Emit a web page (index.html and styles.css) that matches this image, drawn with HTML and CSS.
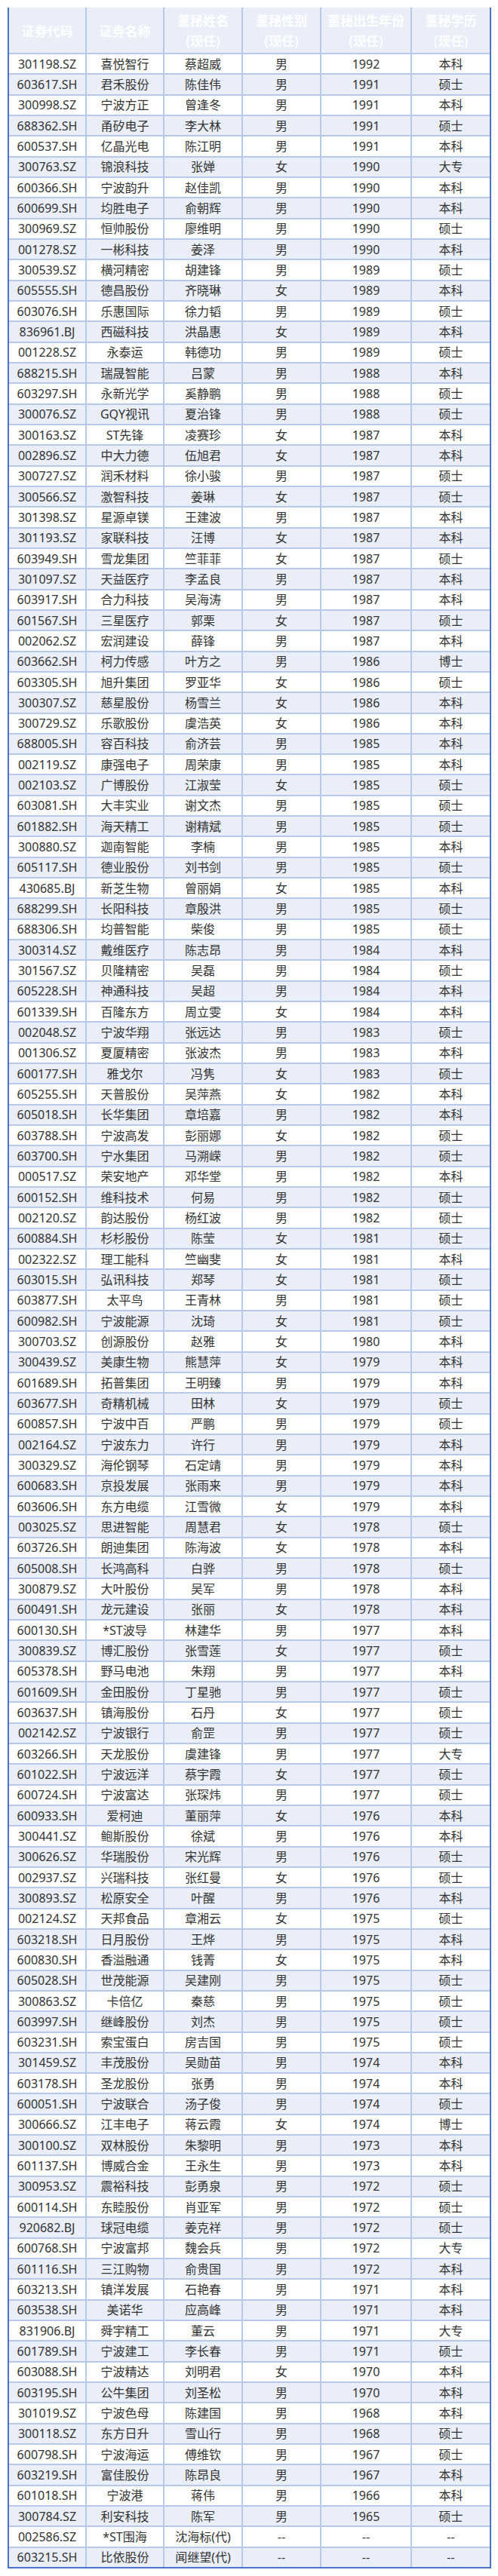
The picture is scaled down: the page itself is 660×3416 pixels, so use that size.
FILE: index.html
```html
<!DOCTYPE html>
<html lang="zh-CN">
<head>
<meta charset="utf-8">
<title>董秘信息</title>
<link rel="stylesheet" href="styles.css">
</head>
<body>
<div class="sheet">
  <div class="row head">
    <div class="cell">证券代码</div>
    <div class="cell">证券名称</div>
    <div class="cell">董秘姓名<br>(现任)</div>
    <div class="cell">董秘性别<br>(现任)</div>
    <div class="cell">董秘出生年份<br>(现任)</div>
    <div class="cell">董秘学历<br>(现任)</div>
  </div>
  <div class="row"><div class="cell">301198.SZ</div><div class="cell">喜悦智行</div><div class="cell">蔡超威</div><div class="cell">男</div><div class="cell">1992</div><div class="cell">本科</div></div>
  <div class="row"><div class="cell">603617.SH</div><div class="cell">君禾股份</div><div class="cell">陈佳伟</div><div class="cell">男</div><div class="cell">1991</div><div class="cell">硕士</div></div>
  <div class="row"><div class="cell">300998.SZ</div><div class="cell">宁波方正</div><div class="cell">曾逢冬</div><div class="cell">男</div><div class="cell">1991</div><div class="cell">本科</div></div>
  <div class="row"><div class="cell">688362.SH</div><div class="cell">甬矽电子</div><div class="cell">李大林</div><div class="cell">男</div><div class="cell">1991</div><div class="cell">硕士</div></div>
  <div class="row"><div class="cell">600537.SH</div><div class="cell">亿晶光电</div><div class="cell">陈江明</div><div class="cell">男</div><div class="cell">1991</div><div class="cell">本科</div></div>
  <div class="row"><div class="cell">300763.SZ</div><div class="cell">锦浪科技</div><div class="cell">张婵</div><div class="cell">女</div><div class="cell">1990</div><div class="cell">大专</div></div>
  <div class="row"><div class="cell">600366.SH</div><div class="cell">宁波韵升</div><div class="cell">赵佳凯</div><div class="cell">男</div><div class="cell">1990</div><div class="cell">本科</div></div>
  <div class="row"><div class="cell">600699.SH</div><div class="cell">均胜电子</div><div class="cell">俞朝辉</div><div class="cell">男</div><div class="cell">1990</div><div class="cell">本科</div></div>
  <div class="row"><div class="cell">300969.SZ</div><div class="cell">恒帅股份</div><div class="cell">廖维明</div><div class="cell">男</div><div class="cell">1990</div><div class="cell">硕士</div></div>
  <div class="row"><div class="cell">001278.SZ</div><div class="cell">一彬科技</div><div class="cell">姜泽</div><div class="cell">男</div><div class="cell">1990</div><div class="cell">本科</div></div>
  <div class="row"><div class="cell">300539.SZ</div><div class="cell">横河精密</div><div class="cell">胡建锋</div><div class="cell">男</div><div class="cell">1989</div><div class="cell">硕士</div></div>
  <div class="row"><div class="cell">605555.SH</div><div class="cell">德昌股份</div><div class="cell">齐晓琳</div><div class="cell">女</div><div class="cell">1989</div><div class="cell">本科</div></div>
  <div class="row"><div class="cell">603076.SH</div><div class="cell">乐惠国际</div><div class="cell">徐力韬</div><div class="cell">男</div><div class="cell">1989</div><div class="cell">硕士</div></div>
  <div class="row"><div class="cell">836961.BJ</div><div class="cell">西磁科技</div><div class="cell">洪晶惠</div><div class="cell">女</div><div class="cell">1989</div><div class="cell">本科</div></div>
  <div class="row"><div class="cell">001228.SZ</div><div class="cell">永泰运</div><div class="cell">韩德功</div><div class="cell">男</div><div class="cell">1989</div><div class="cell">硕士</div></div>
  <div class="row"><div class="cell">688215.SH</div><div class="cell">瑞晟智能</div><div class="cell">吕蒙</div><div class="cell">男</div><div class="cell">1988</div><div class="cell">本科</div></div>
  <div class="row"><div class="cell">603297.SH</div><div class="cell">永新光学</div><div class="cell">奚静鹏</div><div class="cell">男</div><div class="cell">1988</div><div class="cell">硕士</div></div>
  <div class="row"><div class="cell">300076.SZ</div><div class="cell">GQY视讯</div><div class="cell">夏治锋</div><div class="cell">男</div><div class="cell">1988</div><div class="cell">硕士</div></div>
  <div class="row"><div class="cell">300163.SZ</div><div class="cell">ST先锋</div><div class="cell">凌赛珍</div><div class="cell">女</div><div class="cell">1987</div><div class="cell">本科</div></div>
  <div class="row"><div class="cell">002896.SZ</div><div class="cell">中大力德</div><div class="cell">伍旭君</div><div class="cell">女</div><div class="cell">1987</div><div class="cell">本科</div></div>
  <div class="row"><div class="cell">300727.SZ</div><div class="cell">润禾材料</div><div class="cell">徐小骏</div><div class="cell">男</div><div class="cell">1987</div><div class="cell">硕士</div></div>
  <div class="row"><div class="cell">300566.SZ</div><div class="cell">激智科技</div><div class="cell">姜琳</div><div class="cell">女</div><div class="cell">1987</div><div class="cell">硕士</div></div>
  <div class="row"><div class="cell">301398.SZ</div><div class="cell">星源卓镁</div><div class="cell">王建波</div><div class="cell">男</div><div class="cell">1987</div><div class="cell">本科</div></div>
  <div class="row"><div class="cell">301193.SZ</div><div class="cell">家联科技</div><div class="cell">汪博</div><div class="cell">女</div><div class="cell">1987</div><div class="cell">本科</div></div>
  <div class="row"><div class="cell">603949.SH</div><div class="cell">雪龙集团</div><div class="cell">竺菲菲</div><div class="cell">女</div><div class="cell">1987</div><div class="cell">硕士</div></div>
  <div class="row"><div class="cell">301097.SZ</div><div class="cell">天益医疗</div><div class="cell">李孟良</div><div class="cell">男</div><div class="cell">1987</div><div class="cell">本科</div></div>
  <div class="row"><div class="cell">603917.SH</div><div class="cell">合力科技</div><div class="cell">吴海涛</div><div class="cell">男</div><div class="cell">1987</div><div class="cell">本科</div></div>
  <div class="row"><div class="cell">601567.SH</div><div class="cell">三星医疗</div><div class="cell">郭栗</div><div class="cell">女</div><div class="cell">1987</div><div class="cell">硕士</div></div>
  <div class="row"><div class="cell">002062.SZ</div><div class="cell">宏润建设</div><div class="cell">薛锋</div><div class="cell">男</div><div class="cell">1987</div><div class="cell">本科</div></div>
  <div class="row"><div class="cell">603662.SH</div><div class="cell">柯力传感</div><div class="cell">叶方之</div><div class="cell">男</div><div class="cell">1986</div><div class="cell">博士</div></div>
  <div class="row"><div class="cell">603305.SH</div><div class="cell">旭升集团</div><div class="cell">罗亚华</div><div class="cell">女</div><div class="cell">1986</div><div class="cell">硕士</div></div>
  <div class="row"><div class="cell">300307.SZ</div><div class="cell">慈星股份</div><div class="cell">杨雪兰</div><div class="cell">女</div><div class="cell">1986</div><div class="cell">本科</div></div>
  <div class="row"><div class="cell">300729.SZ</div><div class="cell">乐歌股份</div><div class="cell">虞浩英</div><div class="cell">女</div><div class="cell">1986</div><div class="cell">本科</div></div>
  <div class="row"><div class="cell">688005.SH</div><div class="cell">容百科技</div><div class="cell">俞济芸</div><div class="cell">男</div><div class="cell">1985</div><div class="cell">本科</div></div>
  <div class="row"><div class="cell">002119.SZ</div><div class="cell">康强电子</div><div class="cell">周荣康</div><div class="cell">男</div><div class="cell">1985</div><div class="cell">本科</div></div>
  <div class="row"><div class="cell">002103.SZ</div><div class="cell">广博股份</div><div class="cell">江淑莹</div><div class="cell">女</div><div class="cell">1985</div><div class="cell">硕士</div></div>
  <div class="row"><div class="cell">603081.SH</div><div class="cell">大丰实业</div><div class="cell">谢文杰</div><div class="cell">男</div><div class="cell">1985</div><div class="cell">硕士</div></div>
  <div class="row"><div class="cell">601882.SH</div><div class="cell">海天精工</div><div class="cell">谢精斌</div><div class="cell">男</div><div class="cell">1985</div><div class="cell">硕士</div></div>
  <div class="row"><div class="cell">300880.SZ</div><div class="cell">迦南智能</div><div class="cell">李楠</div><div class="cell">男</div><div class="cell">1985</div><div class="cell">本科</div></div>
  <div class="row"><div class="cell">605117.SH</div><div class="cell">德业股份</div><div class="cell">刘书剑</div><div class="cell">男</div><div class="cell">1985</div><div class="cell">硕士</div></div>
  <div class="row"><div class="cell">430685.BJ</div><div class="cell">新芝生物</div><div class="cell">曾丽娟</div><div class="cell">女</div><div class="cell">1985</div><div class="cell">本科</div></div>
  <div class="row"><div class="cell">688299.SH</div><div class="cell">长阳科技</div><div class="cell">章殷洪</div><div class="cell">男</div><div class="cell">1985</div><div class="cell">硕士</div></div>
  <div class="row"><div class="cell">688306.SH</div><div class="cell">均普智能</div><div class="cell">柴俊</div><div class="cell">男</div><div class="cell">1985</div><div class="cell">硕士</div></div>
  <div class="row"><div class="cell">300314.SZ</div><div class="cell">戴维医疗</div><div class="cell">陈志昂</div><div class="cell">男</div><div class="cell">1984</div><div class="cell">本科</div></div>
  <div class="row"><div class="cell">301567.SZ</div><div class="cell">贝隆精密</div><div class="cell">吴磊</div><div class="cell">男</div><div class="cell">1984</div><div class="cell">硕士</div></div>
  <div class="row"><div class="cell">605228.SH</div><div class="cell">神通科技</div><div class="cell">吴超</div><div class="cell">男</div><div class="cell">1984</div><div class="cell">本科</div></div>
  <div class="row"><div class="cell">601339.SH</div><div class="cell">百隆东方</div><div class="cell">周立雯</div><div class="cell">女</div><div class="cell">1984</div><div class="cell">本科</div></div>
  <div class="row"><div class="cell">002048.SZ</div><div class="cell">宁波华翔</div><div class="cell">张远达</div><div class="cell">男</div><div class="cell">1983</div><div class="cell">硕士</div></div>
  <div class="row"><div class="cell">001306.SZ</div><div class="cell">夏厦精密</div><div class="cell">张波杰</div><div class="cell">男</div><div class="cell">1983</div><div class="cell">本科</div></div>
  <div class="row"><div class="cell">600177.SH</div><div class="cell">雅戈尔</div><div class="cell">冯隽</div><div class="cell">女</div><div class="cell">1983</div><div class="cell">硕士</div></div>
  <div class="row"><div class="cell">605255.SH</div><div class="cell">天普股份</div><div class="cell">吴萍燕</div><div class="cell">女</div><div class="cell">1982</div><div class="cell">本科</div></div>
  <div class="row"><div class="cell">605018.SH</div><div class="cell">长华集团</div><div class="cell">章培嘉</div><div class="cell">男</div><div class="cell">1982</div><div class="cell">本科</div></div>
  <div class="row"><div class="cell">603788.SH</div><div class="cell">宁波高发</div><div class="cell">彭丽娜</div><div class="cell">女</div><div class="cell">1982</div><div class="cell">硕士</div></div>
  <div class="row"><div class="cell">603700.SH</div><div class="cell">宁水集团</div><div class="cell">马溯嵘</div><div class="cell">男</div><div class="cell">1982</div><div class="cell">硕士</div></div>
  <div class="row"><div class="cell">000517.SZ</div><div class="cell">荣安地产</div><div class="cell">邓华堂</div><div class="cell">男</div><div class="cell">1982</div><div class="cell">本科</div></div>
  <div class="row"><div class="cell">600152.SH</div><div class="cell">维科技术</div><div class="cell">何易</div><div class="cell">男</div><div class="cell">1982</div><div class="cell">硕士</div></div>
  <div class="row"><div class="cell">002120.SZ</div><div class="cell">韵达股份</div><div class="cell">杨红波</div><div class="cell">男</div><div class="cell">1982</div><div class="cell">硕士</div></div>
  <div class="row"><div class="cell">600884.SH</div><div class="cell">杉杉股份</div><div class="cell">陈莹</div><div class="cell">女</div><div class="cell">1981</div><div class="cell">硕士</div></div>
  <div class="row"><div class="cell">002322.SZ</div><div class="cell">理工能科</div><div class="cell">竺幽斐</div><div class="cell">女</div><div class="cell">1981</div><div class="cell">本科</div></div>
  <div class="row"><div class="cell">603015.SH</div><div class="cell">弘讯科技</div><div class="cell">郑琴</div><div class="cell">女</div><div class="cell">1981</div><div class="cell">硕士</div></div>
  <div class="row"><div class="cell">603877.SH</div><div class="cell">太平鸟</div><div class="cell">王青林</div><div class="cell">男</div><div class="cell">1981</div><div class="cell">硕士</div></div>
  <div class="row"><div class="cell">600982.SH</div><div class="cell">宁波能源</div><div class="cell">沈琦</div><div class="cell">女</div><div class="cell">1981</div><div class="cell">硕士</div></div>
  <div class="row"><div class="cell">300703.SZ</div><div class="cell">创源股份</div><div class="cell">赵雅</div><div class="cell">女</div><div class="cell">1980</div><div class="cell">本科</div></div>
  <div class="row"><div class="cell">300439.SZ</div><div class="cell">美康生物</div><div class="cell">熊慧萍</div><div class="cell">女</div><div class="cell">1979</div><div class="cell">本科</div></div>
  <div class="row"><div class="cell">601689.SH</div><div class="cell">拓普集团</div><div class="cell">王明臻</div><div class="cell">男</div><div class="cell">1979</div><div class="cell">本科</div></div>
  <div class="row"><div class="cell">603677.SH</div><div class="cell">奇精机械</div><div class="cell">田林</div><div class="cell">女</div><div class="cell">1979</div><div class="cell">硕士</div></div>
  <div class="row"><div class="cell">600857.SH</div><div class="cell">宁波中百</div><div class="cell">严鹏</div><div class="cell">男</div><div class="cell">1979</div><div class="cell">硕士</div></div>
  <div class="row"><div class="cell">002164.SZ</div><div class="cell">宁波东力</div><div class="cell">许行</div><div class="cell">男</div><div class="cell">1979</div><div class="cell">本科</div></div>
  <div class="row"><div class="cell">300329.SZ</div><div class="cell">海伦钢琴</div><div class="cell">石定靖</div><div class="cell">男</div><div class="cell">1979</div><div class="cell">本科</div></div>
  <div class="row"><div class="cell">600683.SH</div><div class="cell">京投发展</div><div class="cell">张雨来</div><div class="cell">男</div><div class="cell">1979</div><div class="cell">本科</div></div>
  <div class="row"><div class="cell">603606.SH</div><div class="cell">东方电缆</div><div class="cell">江雪微</div><div class="cell">女</div><div class="cell">1979</div><div class="cell">本科</div></div>
  <div class="row"><div class="cell">003025.SZ</div><div class="cell">思进智能</div><div class="cell">周慧君</div><div class="cell">女</div><div class="cell">1978</div><div class="cell">硕士</div></div>
  <div class="row"><div class="cell">603726.SH</div><div class="cell">朗迪集团</div><div class="cell">陈海波</div><div class="cell">女</div><div class="cell">1978</div><div class="cell">本科</div></div>
  <div class="row"><div class="cell">605008.SH</div><div class="cell">长鸿高科</div><div class="cell">白骅</div><div class="cell">男</div><div class="cell">1978</div><div class="cell">硕士</div></div>
  <div class="row"><div class="cell">300879.SZ</div><div class="cell">大叶股份</div><div class="cell">吴军</div><div class="cell">男</div><div class="cell">1978</div><div class="cell">本科</div></div>
  <div class="row"><div class="cell">600491.SH</div><div class="cell">龙元建设</div><div class="cell">张丽</div><div class="cell">女</div><div class="cell">1978</div><div class="cell">本科</div></div>
  <div class="row"><div class="cell">600130.SH</div><div class="cell">*ST波导</div><div class="cell">林建华</div><div class="cell">男</div><div class="cell">1977</div><div class="cell">本科</div></div>
  <div class="row"><div class="cell">300839.SZ</div><div class="cell">博汇股份</div><div class="cell">张雪莲</div><div class="cell">女</div><div class="cell">1977</div><div class="cell">硕士</div></div>
  <div class="row"><div class="cell">605378.SH</div><div class="cell">野马电池</div><div class="cell">朱翔</div><div class="cell">男</div><div class="cell">1977</div><div class="cell">本科</div></div>
  <div class="row"><div class="cell">601609.SH</div><div class="cell">金田股份</div><div class="cell">丁星驰</div><div class="cell">男</div><div class="cell">1977</div><div class="cell">硕士</div></div>
  <div class="row"><div class="cell">603637.SH</div><div class="cell">镇海股份</div><div class="cell">石丹</div><div class="cell">女</div><div class="cell">1977</div><div class="cell">硕士</div></div>
  <div class="row"><div class="cell">002142.SZ</div><div class="cell">宁波银行</div><div class="cell">俞罡</div><div class="cell">男</div><div class="cell">1977</div><div class="cell">硕士</div></div>
  <div class="row"><div class="cell">603266.SH</div><div class="cell">天龙股份</div><div class="cell">虞建锋</div><div class="cell">男</div><div class="cell">1977</div><div class="cell">大专</div></div>
  <div class="row"><div class="cell">601022.SH</div><div class="cell">宁波远洋</div><div class="cell">蔡宇霞</div><div class="cell">女</div><div class="cell">1977</div><div class="cell">硕士</div></div>
  <div class="row"><div class="cell">600724.SH</div><div class="cell">宁波富达</div><div class="cell">张琛炜</div><div class="cell">男</div><div class="cell">1977</div><div class="cell">硕士</div></div>
  <div class="row"><div class="cell">600933.SH</div><div class="cell">爱柯迪</div><div class="cell">董丽萍</div><div class="cell">女</div><div class="cell">1976</div><div class="cell">本科</div></div>
  <div class="row"><div class="cell">300441.SZ</div><div class="cell">鲍斯股份</div><div class="cell">徐斌</div><div class="cell">男</div><div class="cell">1976</div><div class="cell">本科</div></div>
  <div class="row"><div class="cell">300626.SZ</div><div class="cell">华瑞股份</div><div class="cell">宋光辉</div><div class="cell">男</div><div class="cell">1976</div><div class="cell">硕士</div></div>
  <div class="row"><div class="cell">002937.SZ</div><div class="cell">兴瑞科技</div><div class="cell">张红曼</div><div class="cell">女</div><div class="cell">1976</div><div class="cell">硕士</div></div>
  <div class="row"><div class="cell">300893.SZ</div><div class="cell">松原安全</div><div class="cell">叶醒</div><div class="cell">男</div><div class="cell">1976</div><div class="cell">本科</div></div>
  <div class="row"><div class="cell">002124.SZ</div><div class="cell">天邦食品</div><div class="cell">章湘云</div><div class="cell">女</div><div class="cell">1975</div><div class="cell">硕士</div></div>
  <div class="row"><div class="cell">603218.SH</div><div class="cell">日月股份</div><div class="cell">王烨</div><div class="cell">男</div><div class="cell">1975</div><div class="cell">本科</div></div>
  <div class="row"><div class="cell">600830.SH</div><div class="cell">香溢融通</div><div class="cell">钱菁</div><div class="cell">女</div><div class="cell">1975</div><div class="cell">本科</div></div>
  <div class="row"><div class="cell">605028.SH</div><div class="cell">世茂能源</div><div class="cell">吴建刚</div><div class="cell">男</div><div class="cell">1975</div><div class="cell">硕士</div></div>
  <div class="row"><div class="cell">300863.SZ</div><div class="cell">卡倍亿</div><div class="cell">秦慈</div><div class="cell">男</div><div class="cell">1975</div><div class="cell">硕士</div></div>
  <div class="row"><div class="cell">603997.SH</div><div class="cell">继峰股份</div><div class="cell">刘杰</div><div class="cell">男</div><div class="cell">1975</div><div class="cell">硕士</div></div>
  <div class="row"><div class="cell">603231.SH</div><div class="cell">索宝蛋白</div><div class="cell">房吉国</div><div class="cell">男</div><div class="cell">1975</div><div class="cell">硕士</div></div>
  <div class="row"><div class="cell">301459.SZ</div><div class="cell">丰茂股份</div><div class="cell">吴勋苗</div><div class="cell">男</div><div class="cell">1974</div><div class="cell">本科</div></div>
  <div class="row"><div class="cell">603178.SH</div><div class="cell">圣龙股份</div><div class="cell">张勇</div><div class="cell">男</div><div class="cell">1974</div><div class="cell">本科</div></div>
  <div class="row"><div class="cell">600051.SH</div><div class="cell">宁波联合</div><div class="cell">汤子俊</div><div class="cell">男</div><div class="cell">1974</div><div class="cell">硕士</div></div>
  <div class="row"><div class="cell">300666.SZ</div><div class="cell">江丰电子</div><div class="cell">蒋云霞</div><div class="cell">女</div><div class="cell">1974</div><div class="cell">博士</div></div>
  <div class="row"><div class="cell">300100.SZ</div><div class="cell">双林股份</div><div class="cell">朱黎明</div><div class="cell">男</div><div class="cell">1973</div><div class="cell">本科</div></div>
  <div class="row"><div class="cell">601137.SH</div><div class="cell">博威合金</div><div class="cell">王永生</div><div class="cell">男</div><div class="cell">1973</div><div class="cell">本科</div></div>
  <div class="row"><div class="cell">300953.SZ</div><div class="cell">震裕科技</div><div class="cell">彭勇泉</div><div class="cell">男</div><div class="cell">1972</div><div class="cell">硕士</div></div>
  <div class="row"><div class="cell">600114.SH</div><div class="cell">东睦股份</div><div class="cell">肖亚军</div><div class="cell">男</div><div class="cell">1972</div><div class="cell">硕士</div></div>
  <div class="row"><div class="cell">920682.BJ</div><div class="cell">球冠电缆</div><div class="cell">姜克祥</div><div class="cell">男</div><div class="cell">1972</div><div class="cell">硕士</div></div>
  <div class="row"><div class="cell">600768.SH</div><div class="cell">宁波富邦</div><div class="cell">魏会兵</div><div class="cell">男</div><div class="cell">1972</div><div class="cell">大专</div></div>
  <div class="row"><div class="cell">601116.SH</div><div class="cell">三江购物</div><div class="cell">俞贵国</div><div class="cell">男</div><div class="cell">1972</div><div class="cell">本科</div></div>
  <div class="row"><div class="cell">603213.SH</div><div class="cell">镇洋发展</div><div class="cell">石艳春</div><div class="cell">男</div><div class="cell">1971</div><div class="cell">本科</div></div>
  <div class="row"><div class="cell">603538.SH</div><div class="cell">美诺华</div><div class="cell">应高峰</div><div class="cell">男</div><div class="cell">1971</div><div class="cell">本科</div></div>
  <div class="row"><div class="cell">831906.BJ</div><div class="cell">舜宇精工</div><div class="cell">董云</div><div class="cell">男</div><div class="cell">1971</div><div class="cell">大专</div></div>
  <div class="row"><div class="cell">601789.SH</div><div class="cell">宁波建工</div><div class="cell">李长春</div><div class="cell">男</div><div class="cell">1971</div><div class="cell">硕士</div></div>
  <div class="row"><div class="cell">603088.SH</div><div class="cell">宁波精达</div><div class="cell">刘明君</div><div class="cell">女</div><div class="cell">1970</div><div class="cell">本科</div></div>
  <div class="row"><div class="cell">603195.SH</div><div class="cell">公牛集团</div><div class="cell">刘圣松</div><div class="cell">男</div><div class="cell">1970</div><div class="cell">本科</div></div>
  <div class="row"><div class="cell">301019.SZ</div><div class="cell">宁波色母</div><div class="cell">陈建国</div><div class="cell">男</div><div class="cell">1968</div><div class="cell">本科</div></div>
  <div class="row"><div class="cell">300118.SZ</div><div class="cell">东方日升</div><div class="cell">雪山行</div><div class="cell">男</div><div class="cell">1968</div><div class="cell">硕士</div></div>
  <div class="row"><div class="cell">600798.SH</div><div class="cell">宁波海运</div><div class="cell">傅维钦</div><div class="cell">男</div><div class="cell">1967</div><div class="cell">硕士</div></div>
  <div class="row"><div class="cell">603219.SH</div><div class="cell">富佳股份</div><div class="cell">陈昂良</div><div class="cell">男</div><div class="cell">1967</div><div class="cell">本科</div></div>
  <div class="row"><div class="cell">601018.SH</div><div class="cell">宁波港</div><div class="cell">蒋伟</div><div class="cell">男</div><div class="cell">1966</div><div class="cell">本科</div></div>
  <div class="row"><div class="cell">300784.SZ</div><div class="cell">利安科技</div><div class="cell">陈军</div><div class="cell">男</div><div class="cell">1965</div><div class="cell">硕士</div></div>
  <div class="row"><div class="cell">002586.SZ</div><div class="cell">*ST围海</div><div class="cell">沈海标(代)</div><div class="cell">--</div><div class="cell">--</div><div class="cell">--</div></div>
  <div class="row"><div class="cell">603215.SH</div><div class="cell">比依股份</div><div class="cell">闻继望(代)</div><div class="cell">--</div><div class="cell">--</div><div class="cell">--</div></div>
</div>
</body>
</html>
```

FILE: styles.css
```css
html, body {
  margin: 0;
  padding: 0;
  background: #ffffff;
}

body {
  font-family: "Noto Sans", "Noto Sans CJK SC", sans-serif;
  color: #333333;
}

.sheet {
  display: grid;
  grid-template-columns: 101fr 101fr 102fr 102fr 118fr 103fr;
  grid-template-rows: 60px;
  grid-auto-rows: 25.33px;
  gap: 2px;
  width: 641px;
  box-sizing: border-box;
  margin: 10px 0 0 10px;
  background: #b7c8e8;
  border: 2px solid #4a74c6;
  border-top: 0;
}

.row {
  display: contents;
}

.cell {
  display: flex;
  align-items: center;
  justify-content: center;
  text-align: center;
  font-size: 16px;
  line-height: 1;
  background: #ffffff;
  white-space: nowrap;
}

.row:nth-child(odd) .cell {
  background: #e9eef8;
}

.head .cell {
  background: #4a74c6;
  color: #ffffff;
  font-family: "Noto Sans CJK SC", sans-serif;
  font-weight: 700;
  font-size: 17px;
  line-height: 27px;
}
```
